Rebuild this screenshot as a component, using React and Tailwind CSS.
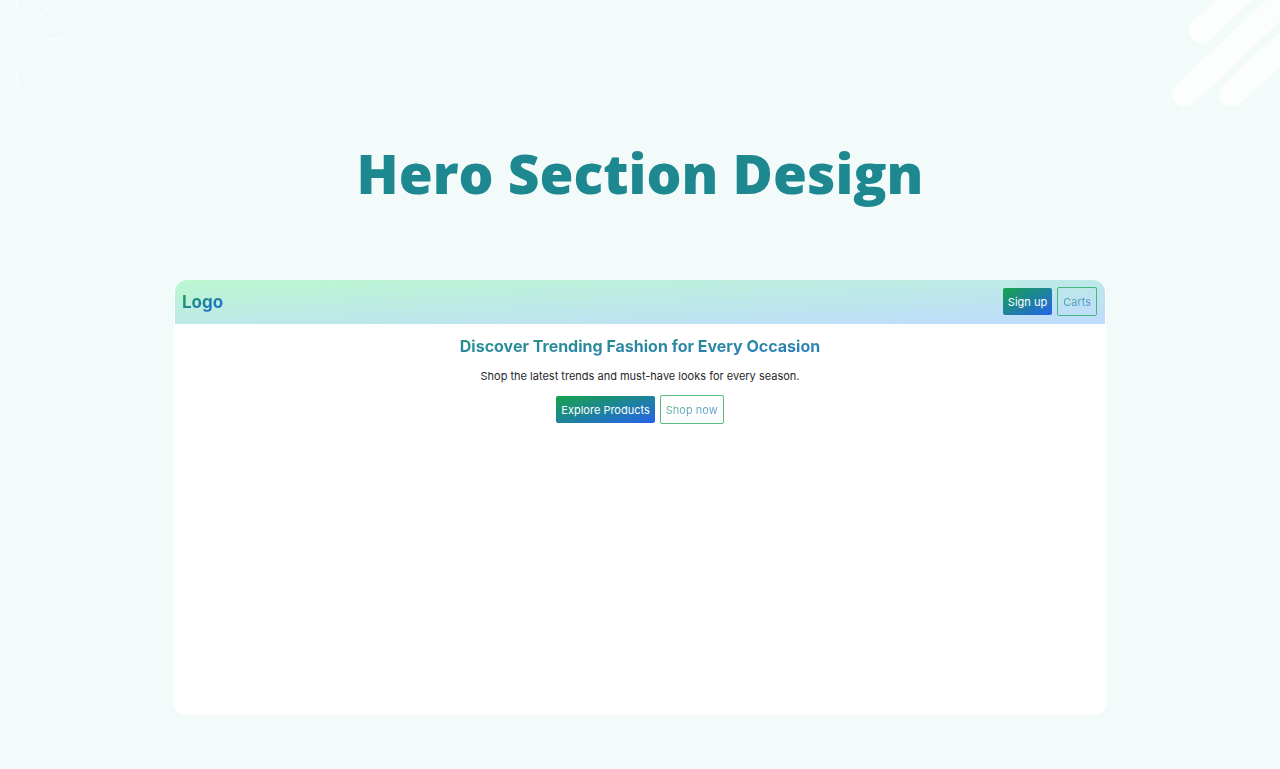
const solid =
  "rounded-xs bg-[linear-gradient(to_bottom_right,#16a34a,#2563eb)] px-[5px] pt-1.5 pb-1 text-[11px] leading-[17px] text-white";
const outline =
  "rounded-xs border border-[#16a34a]/70 px-[5px] pt-1.5 pb-1 text-[11px] leading-[17px]";
const gradientText =
  "bg-[linear-gradient(to_bottom_right,#16a34a,#2563eb)] bg-clip-text text-transparent";

function Rays() {
  return (
    <svg
      className="absolute left-0 top-0 h-[90px] w-[70px]"
      viewBox="0 0 70 90"
      stroke="#f9fdfd"
      strokeWidth="2"
      fill="none"
      aria-hidden="true"
    >
      <path d="M17 0V8M39 16.500L49 7M48 39H62M39 61L49 70.500M17 70V84" />
    </svg>
  );
}

function Stripes() {
  return (
    <svg
      className="absolute right-0 top-0 h-[110px] w-[110px]"
      viewBox="0 0 110 110"
      stroke="#fcfefe"
      strokeWidth="25"
      strokeLinecap="round"
      fill="none"
      aria-hidden="true"
    >
      <path d="M31 31L91 -26M14.500 94.500L124.500 -10M62 94.500L172 -10" />
    </svg>
  );
}

export default function App() {
  return (
    <div className="relative min-h-screen overflow-hidden bg-[#f2fbfa] px-6 pt-[133px] pb-[54px] font-['Inter',sans-serif]">
      <Rays />
      <Stripes />
      <h1 className="text-center font-['Open_Sans',sans-serif] text-[55px] leading-[80px] font-extrabold text-[#1d888f]">
        Hero Section Design
      </h1>
      <div className="mx-auto mt-[67px] min-h-[435px] max-w-[932px] overflow-hidden rounded-xl bg-white px-px">
        <header className="flex items-center justify-between rounded-t-xl bg-[linear-gradient(to_bottom_right,#bbf7d0,#bfdbfe)] pt-[7px] pr-2 pb-2 pl-[7px]">
          <a href="#" className={`text-[17px] leading-6 font-bold ${gradientText}`}>
            Logo
          </a>
          <nav className="flex items-center gap-[5px]">
            <button type="button" className={solid}>
              Sign up
            </button>
            <button type="button" className={outline}>
              <span className={`opacity-70 ${gradientText}`}>Carts</span>
            </button>
          </nav>
        </header>
        <main className="flex flex-col items-center pt-2 text-center">
          <h2 className={`w-full text-base leading-7 font-bold opacity-95 ${gradientText}`}>
            Discover Trending Fashion for Every Occasion
          </h2>
          <p className="mt-2 text-[11px] leading-[17px] text-[#27272a]">
            Shop the latest trends and must-have looks for every season.
          </p>
          <div className="mt-[10px] flex items-center gap-[5px]">
            <button type="button" className={solid}>
              Explore Products
            </button>
            <button type="button" className={outline}>
              <span className={`opacity-70 ${gradientText}`}>Shop now</span>
            </button>
          </div>
        </main>
      </div>
    </div>
  );
}
